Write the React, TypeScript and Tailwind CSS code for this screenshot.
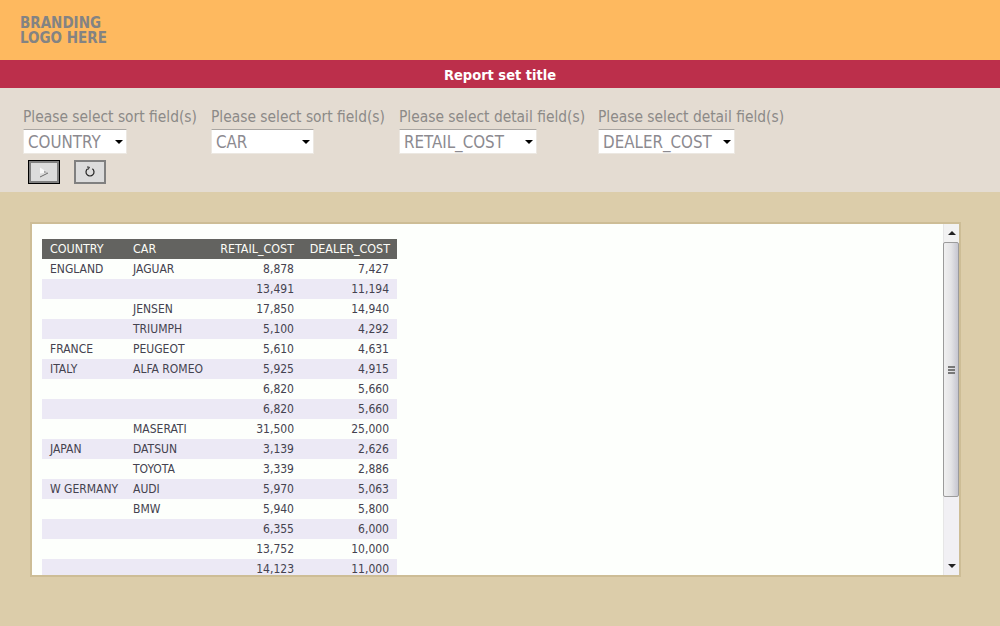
import { useState } from "react";

const font = "font-['DejaVu_Sans_Condensed','DejaVu_Sans',sans-serif]";

const rows = [
  ["ENGLAND", "JAGUAR", "8,878", "7,427"],
  ["", "", "13,491", "11,194"],
  ["", "JENSEN", "17,850", "14,940"],
  ["", "TRIUMPH", "5,100", "4,292"],
  ["FRANCE", "PEUGEOT", "5,610", "4,631"],
  ["ITALY", "ALFA ROMEO", "5,925", "4,915"],
  ["", "", "6,820", "5,660"],
  ["", "", "6,820", "5,660"],
  ["", "MASERATI", "31,500", "25,000"],
  ["JAPAN", "DATSUN", "3,139", "2,626"],
  ["", "TOYOTA", "3,339", "2,886"],
  ["W GERMANY", "AUDI", "5,970", "5,063"],
  ["", "BMW", "5,940", "5,800"],
  ["", "", "6,355", "6,000"],
  ["", "", "13,752", "10,000"],
  ["", "", "14,123", "11,000"],
];

const pickers = [
  { label: "Please select sort field(s)", value: "COUNTRY", width: "w-[104px]", col: "w-[188px]" },
  { label: "Please select sort field(s)", value: "CAR", width: "w-[103px]", col: "w-[188px]" },
  { label: "Please select detail field(s)", value: "RETAIL_COST", width: "w-[138px]", col: "w-[199px]" },
  { label: "Please select detail field(s)", value: "DEALER_COST", width: "w-[137px]", col: "w-[199px]" },
];

function Picker({ label, value, width, col }: { label: string; value: string; width: string; col: string }) {
  const [val, setVal] = useState(value);
  return (
    <div className={col}>
      <div className="h-[25px] pt-[1px] text-[15.4px] leading-[24px] text-[#8c8a88] whitespace-nowrap">{label}</div>
      <div className={`relative h-[25px] ${width}`}>
        <select
          value={val}
          onChange={(e) => setVal(e.target.value)}
          className="h-full w-full appearance-none rounded-none border border-[#ece8e2] border-t-[#aaa6a2] bg-white pl-[4px] pt-[1px] text-[16.8px] leading-[22px] text-[#8c8a90] outline-none"
        >
          {pickers.map((p) => (
            <option key={p.value}>{p.value}</option>
          ))}
        </select>
        <span className="pointer-events-none absolute right-[4px] top-[11px] h-0 w-0 border-x-[4px] border-t-[4px] border-x-transparent border-t-black" />
      </div>
    </div>
  );
}

function ScrollBar() {
  return (
    <div className="flex w-[16px] shrink-0 flex-col border-l border-[#e6e6e6] bg-[#f1f0f4]">
      <div className="flex h-[18px] items-center justify-center bg-[#f2f2f2]">
        <span className="h-0 w-0 border-x-[4px] border-b-[4px] border-x-transparent border-b-[#222]" />
      </div>
      <div className="ml-[-1px] flex h-[255px] items-center justify-center rounded-[2px] border border-[#9b9b9b] bg-gradient-to-r from-[#f0f0f0] via-[#e4e4e6] to-[#c6c6d0]">
        <div className="flex w-[7px] flex-col gap-[1px]">
          <span className="h-[2px] bg-[#777]" />
          <span className="h-[2px] bg-[#777]" />
          <span className="h-[2px] bg-[#777]" />
        </div>
      </div>
      <div className="flex-1" />
      <div className="flex h-[18px] items-center justify-center">
        <span className="h-0 w-0 border-x-[4px] border-t-[4px] border-x-transparent border-t-[#222]" />
      </div>
    </div>
  );
}

export default function App() {
  return (
    <div className={`flex h-[626px] w-[1000px] flex-col overflow-hidden bg-[#dccdaa] ${font}`}>
      {/* Branding */}
      <div className="h-[60px] bg-[#feb95f] pl-[20px] pt-[16px] text-[15px] font-bold leading-[15px] text-[#838383]">
        BRANDING
        <br />
        LOGO HERE
      </div>

      {/* Title */}
      <div className="h-[28px] bg-[#bc2f4b] text-center text-[14.5px] font-bold leading-[30px] text-white">
        Report set title
      </div>

      {/* Selection */}
      <div className="h-[104px] bg-[#e4dcd2] pl-[23px] pt-[16px]">
        <div className="flex">
          {pickers.map((p, i) => (
            <Picker key={i} {...p} />
          ))}
        </div>
        <div className="mt-[6px] flex gap-[14px] pl-[5px]">
          <button className="flex h-[24px] w-[32px] items-center justify-center border border-black bg-[#dcdcdc] shadow-[inset_2px_2px_0_#808080,inset_-2px_-2px_0_#808080]">
            <svg width="10" height="11" viewBox="0 0 10 11">
              <path d="M1 0.5 L9 5.5 L1 6.5 Z" fill="#f8f8f8" />
              <path d="M5 3.5 L9 5.5 L5 6 Z" fill="#a8a8a8" />
              <path d="M1 10 L9 6" stroke="#6a6a6a" strokeWidth="1" fill="none" />
            </svg>
          </button>
          <button className="flex h-[24px] w-[32px] items-center justify-center border-2 border-[#808080] bg-[#dcdcdc]">
            <svg width="12" height="12" viewBox="0 0 12 12" fill="none" stroke="#222" strokeWidth="1.2">
              <path d="M3.6 2.8 A4 4 0 1 0 8.4 2.8" />
              <path d="M3 1 L5.4 1.2 L4.2 3.6" strokeWidth="1" />
            </svg>
          </button>
        </div>
      </div>

      {/* Report */}
      <div className="ml-[30px] mt-[30px] flex h-[355px] w-[931px] border-2 border-[#cdbd96] bg-[#fdfffc]">
        <div className="flex-1 overflow-hidden pl-[10px] pt-[15px]">
          <table className="w-[355px] table-fixed border-collapse text-[12px] leading-[20px] text-[#44424f]">
            <colgroup>
              <col className="w-[83px]" />
              <col className="w-[87px]" />
              <col className="w-[90px]" />
              <col className="w-[95px]" />
            </colgroup>
            <thead>
              <tr className="h-[20px] bg-[#636360] text-[12.4px] text-[#fdfdf8]">
                <th className="pl-[8px] text-left font-normal">COUNTRY</th>
                <th className="pl-[8px] text-left font-normal">CAR</th>
                <th className="pr-[8px] text-right font-normal">RETAIL_COST</th>
                <th className="pr-[7px] text-right font-normal">DEALER_COST</th>
              </tr>
            </thead>
            <tbody>
              {rows.map((r, i) => (
                <tr key={i} className={`h-[20px] ${i % 2 === 1 ? "bg-[#ece9f5]" : ""}`}>
                  <td className="whitespace-nowrap pl-[8px]">{r[0]}</td>
                  <td className="whitespace-nowrap pl-[8px]">{r[1]}</td>
                  <td className="pr-[8px] text-right">{r[2]}</td>
                  <td className="pr-[8px] text-right">{r[3]}</td>
                </tr>
              ))}
            </tbody>
          </table>
        </div>
        <ScrollBar />
      </div>
    </div>
  );
}
